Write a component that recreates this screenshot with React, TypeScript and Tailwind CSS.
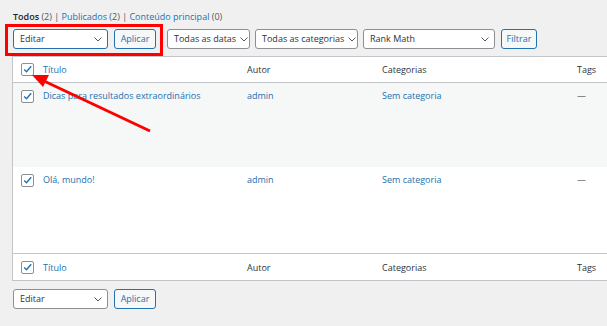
import React from "react";

const font = { fontFamily: '"Open Sans", "Noto Sans", sans-serif' };

function Chevron() {
  return (
    <svg width="8" height="5" viewBox="0 0 8 5" className="shrink-0">
      <path d="M0.5 0.5 L4 4 L7.5 0.5" fill="none" stroke="#50575e" strokeWidth="1" />
    </svg>
  );
}

function Select({ label, width, focused }: { label: string; width: string; focused?: boolean }) {
  return (
    <div
      className={`flex items-center justify-between gap-[4px] h-[20px] pl-[6px] pr-[5px] bg-white rounded-[3px] border text-[9px] text-[#2c3338] whitespace-nowrap shrink-0 ${width} ${
        focused ? "border-[#2271b1]" : "border-[#8c8f94]"
      }`}
    >
      <span>{label}</span>
      <Chevron />
    </div>
  );
}

function Button({ label, width }: { label: string; width: string }) {
  return (
    <div
      className={`flex items-center justify-center h-[20px] rounded-[3px] border border-[#2271b1] bg-[#f6f7f7] text-[9px] text-[#2271b1] whitespace-nowrap shrink-0 ${width}`}
    >
      {label}
    </div>
  );
}

function Check() {
  return (
    <div className="w-[13px] h-[13px] rounded-[2px] border border-[#8c8f94] bg-white flex items-center justify-center">
      <svg width="11" height="11" viewBox="0 0 11 11">
        <path d="M2.2 5.6 L4.5 7.8 L9.2 2.2" fill="none" stroke="#2271b1" strokeWidth="1.4" />
      </svg>
    </div>
  );
}

function HeadRow() {
  return (
    <div className="flex items-center h-[25px] text-[9px] text-[#2c3338] whitespace-nowrap">
      <div className="w-[30px] pl-[8px]">
        <Check />
      </div>
      <div className="w-[204px] text-[#2271b1]">Título</div>
      <div className="w-[135px]">Autor</div>
      <div className="w-[195px]">Categorias</div>
      <div>Tags</div>
    </div>
  );
}

function PostRow({ title, bg, h }: { title: string; bg: string; h: string }) {
  return (
    <div className={`flex items-start ${bg} ${h} text-[9px] text-[#2271b1] whitespace-nowrap`}>
      <div className="w-[30px] pl-[8px] pt-[7px]">
        <Check />
      </div>
      <div className="w-[204px] pt-[6px]">{title}</div>
      <div className="w-[135px] pt-[6px]">admin</div>
      <div className="w-[195px] pt-[6px]">Sem categoria</div>
      <div className="pt-[6px] text-[#2c3338]">—</div>
    </div>
  );
}

export default function App() {
  return (
    <div className="relative w-[607px] h-[326px] overflow-hidden bg-[#f0f0f1]" style={font}>
      <div className="pl-[13px] pt-[10px] h-[19px] text-[9px] leading-[14px] text-[#50575e] whitespace-nowrap">
        <span className="text-[#1d2327] font-semibold">Todos</span> (2) |{" "}
        <span className="text-[#2271b1]">Publicados</span> (2) |{" "}
        <span className="text-[#2271b1]">Conteúdo principal</span> (0)
      </div>

      <div className="flex items-center pl-[13px] pt-[10px]">
        <Select label="Editar" width="w-[95px]" focused />
        <div className="w-[6px]" />
        <Button label="Aplicar" width="w-[42px]" />
        <div className="w-[11px]" />
        <Select label="Todas as datas" width="w-[83px]" />
        <div className="w-[5px]" />
        <Select label="Todas as categorias" width="w-[103px]" />
        <div className="w-[5px]" />
        <Select label="Rank Math" width="w-[132px]" />
        <div className="w-[6px]" />
        <Button label="Filtrar" width="w-[36px]" />
      </div>

      <div className="ml-[12px] mt-[7px] w-[620px] bg-white border border-[#c3c4c7]">
        <div className="border-b border-[#c3c4c7]">
          <HeadRow />
        </div>
        <PostRow title="Dicas para resultados extraordinários" bg="bg-[#f6f7f7]" h="h-[84px]" />
        <PostRow title="Olá, mundo!" bg="bg-white" h="h-[86px]" />
        <div className="border-t border-[#c3c4c7] pt-[1px]">
          <HeadRow />
        </div>
      </div>

      <div className="flex items-center pl-[13px] pt-[8px]">
        <Select label="Editar" width="w-[95px]" />
        <div className="w-[6px]" />
        <Button label="Aplicar" width="w-[42px]" />
      </div>

      {/* annotation */}
      <div className="absolute left-[5px] top-[24px] w-[158px] h-[32px] border-[3px] border-[#ff0000]" />
      <svg className="absolute left-0 top-0" width="607" height="326">
        <line x1="150" y1="131" x2="44" y2="81" stroke="#ff0000" strokeWidth="3" />
        <polygon points="32,75 49,75 43,87" fill="#ff0000" />
      </svg>
    </div>
  );
}
